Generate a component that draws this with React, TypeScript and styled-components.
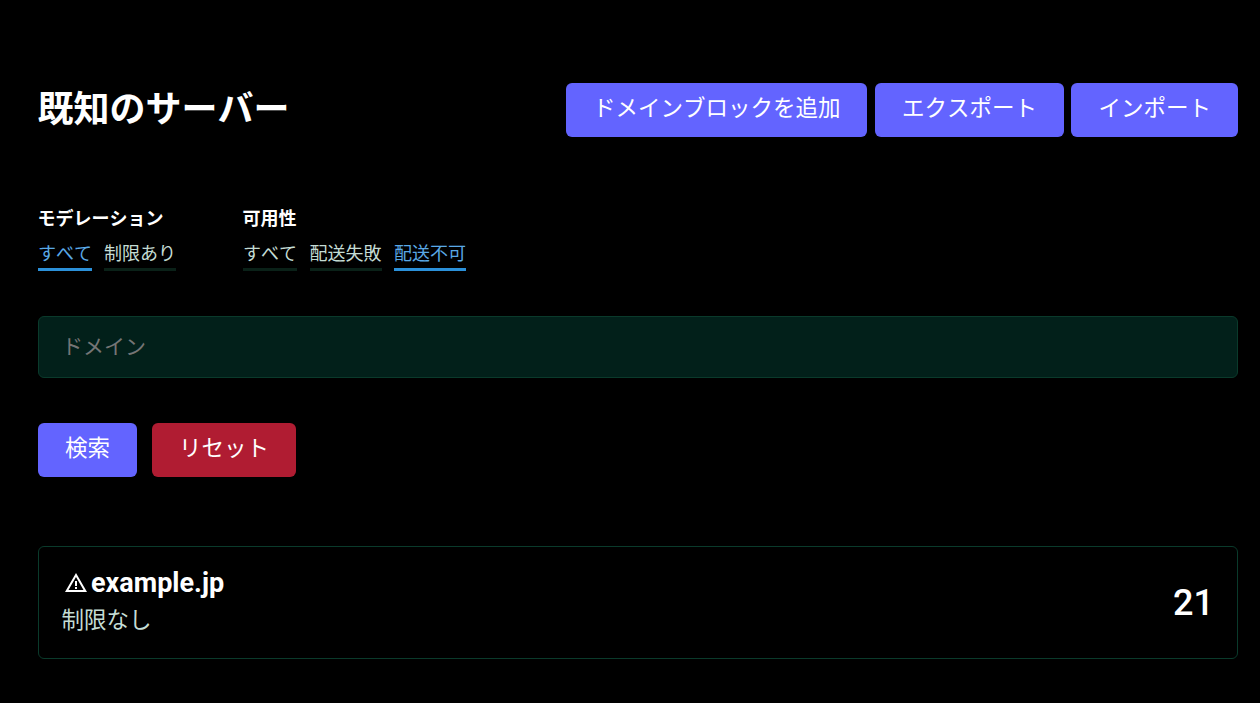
import React from "react";
import styled, { createGlobalStyle } from "styled-components";

const GlobalStyle = createGlobalStyle`
  html, body {
    margin: 0;
    background: #000;
    color: #fff;
    font-family: Roboto, "Noto Sans CJK JP", sans-serif;
    font-kerning: none;
  }
`;

const WarningIcon = () => (
  <svg width='24' height='24' viewBox='0 0 24 24' fill='currentColor'>
    <path d='M12 5.99 19.53 19H4.47L12 5.99M12 2 1 21h22L12 2zm1 14h-2v2h2v-2zm0-6h-2v5h2v-5z' />
  </svg>
);

const App = () => {
  return (
    <Page>
      <GlobalStyle />
      <Header>
        <Title>既知のサーバー</Title>
        <Actions>
          <Button>ドメインブロックを追加</Button>
          <Button>エクスポート</Button>
          <Button>インポート</Button>
        </Actions>
      </Header>

      <Filters>
        <FilterGroup>
          <FilterLabel>モデレーション</FilterLabel>
          <Tabs gap='12px'>
            <Tab active>すべて</Tab>
            <Tab>制限あり</Tab>
          </Tabs>
        </FilterGroup>
        <FilterGroup>
          <FilterLabel>可用性</FilterLabel>
          <Tabs gap='12.5px'>
            <Tab>すべて</Tab>
            <Tab>配送失敗</Tab>
            <Tab active>配送不可</Tab>
          </Tabs>
        </FilterGroup>
      </Filters>

      <DomainInput placeholder='ドメイン' />

      <SearchRow>
        <Button>検索</Button>
        <Button danger>リセット</Button>
      </SearchRow>

      <Card>
        <div>
          <CardTitle>
            <WarningIcon />
            example.jp
          </CardTitle>
          <CardText>制限なし</CardText>
        </div>
        <Count>21</Count>
      </Card>
    </Page>
  );
};

export default App;

const Page = styled.div`
  padding: 83px 22px 44px 38px;
  height: 703px;
  box-sizing: border-box;
  overflow: hidden;
`;
const Header = styled.div`
  display: flex;
  align-items: center;
  justify-content: space-between;
`;
const Title = styled.h1`
  margin: 0 0 0 -0.5px;
  font-size: 36px;
  font-weight: 700;
  line-height: 54px;
  height: 54px;
`;
const Actions = styled.div`
  display: flex;
  gap: 7.5px;
`;
const Button = styled.button<{ danger?: boolean }>`
  height: 54px;
  padding: 0 27px 3px;
  border: 0;
  border-radius: 6px;
  background-color: ${(props) => (props.danger ? "#b01c32" : "#6364ff")};
  color: #fff;
  font-family: inherit;
  font-kerning: none;
  font-size: 22.5px;
  font-weight: 400;
  line-height: 1;
  cursor: pointer;
`;
const Filters = styled.div`
  display: flex;
  gap: 67px;
  margin-top: 70px;
`;
const FilterGroup = styled.div`
  display: flex;
  flex-direction: column;
`;
const FilterLabel = styled.strong`
  margin-left: -0.5px;
  font-size: 18px;
  font-weight: 700;
  line-height: 24px;
`;
const Tabs = styled.div<{ gap: string }>`
  display: flex;
  gap: ${(props) => props.gap};
  margin-top: 12px;
`;
const Tab = styled.a<{ active?: boolean }>`
  display: block;
  height: 25px;
  border-bottom: 3px solid ${(props) => (props.active ? "#2b90d9" : "#0a2118")};
  color: ${(props) => (props.active ? "#5aa9e6" : "#c4dcd4")};
  font-size: 18px;
  line-height: 21px;
  white-space: nowrap;
  cursor: pointer;
`;
const DomainInput = styled.input`
  display: block;
  box-sizing: border-box;
  width: 100%;
  height: 62px;
  margin-top: 45px;
  padding: 0 23px;
  border: 1.5px solid #0a3a2b;
  border-radius: 6px;
  background: #02201a;
  color: #fff;
  font-family: inherit;
  font-kerning: none;
  font-size: 21px;
  outline: none;
  ::placeholder {
    color: #8c9c97;
    opacity: 1;
  }
`;
const SearchRow = styled.div`
  display: flex;
  gap: 15px;
  margin-top: 45px;
`;
const Card = styled.div`
  display: flex;
  align-items: center;
  justify-content: space-between;
  box-sizing: border-box;
  height: 113px;
  margin-top: 69px;
  padding: 0 23px;
  border: 1.5px solid #0a3a2b;
  border-radius: 6px;
`;
const CardTitle = styled.div`
  display: flex;
  align-items: center;
  gap: 3px;
  padding-left: 2px;
  font-size: 27px;
  font-weight: 700;
  line-height: 36px;
  margin-top: -3px;
`;
const CardText = styled.div`
  margin: 2px 0 0 -0.5px;
  color: #c4dcd4;
  font-size: 22.5px;
  line-height: 34px;
`;
const Count = styled.div`
  font-size: 36px;
  font-weight: 500;
  line-height: 1;
`;
